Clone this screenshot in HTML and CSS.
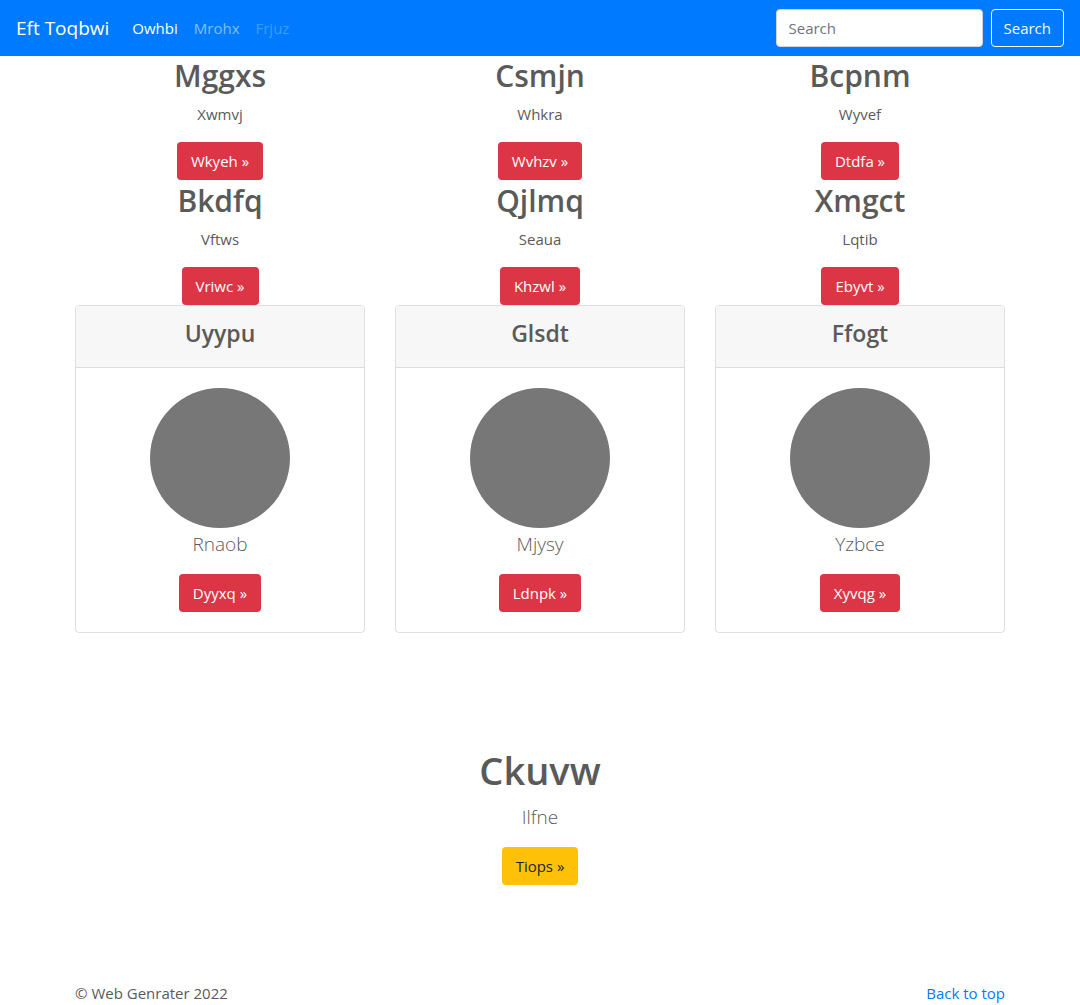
FILE: index.html
```html
<!DOCTYPE html>
<html lang="en">
<head>
<meta charset="utf-8">
<meta name="viewport" content="width=device-width, initial-scale=1">
<title>Eft Toqbwi</title>
<link rel="stylesheet" href="styles.css">
</head>
<body>
<header class="navbar" id="top">
  <a class="brand" href="#">Eft Toqbwi</a>
  <nav class="nav">
    <a class="nav-link active" href="#">Owhbi</a>
    <a class="nav-link" href="#">Mrohx</a>
    <a class="nav-link disabled" href="#" aria-disabled="true">Frjuz</a>
  </nav>
  <form class="search">
    <input class="search-input" type="search" placeholder="Search" aria-label="Search">
    <button class="btn btn-outline" type="submit">Search</button>
  </form>
</header>
<main class="container">
  <div class="row">
    <section class="feature"><h2>Mggxs</h2><p>Xwmvj</p><a class="btn btn-danger" href="#">Wkyeh »</a></section>
    <section class="feature"><h2>Csmjn</h2><p>Whkra</p><a class="btn btn-danger" href="#">Wvhzv »</a></section>
    <section class="feature"><h2>Bcpnm</h2><p>Wyvef</p><a class="btn btn-danger" href="#">Dtdfa »</a></section>
    <section class="feature"><h2>Bkdfq</h2><p>Vftws</p><a class="btn btn-danger" href="#">Vriwc »</a></section>
    <section class="feature"><h2>Qjlmq</h2><p>Seaua</p><a class="btn btn-danger" href="#">Khzwl »</a></section>
    <section class="feature"><h2>Xmgct</h2><p>Lqtib</p><a class="btn btn-danger" href="#">Ebyvt »</a></section>
  </div>
  <div class="row">
    <article class="card">
      <div class="card-header"><h4>Uyypu</h4></div>
      <div class="card-body"><div class="avatar"></div><p class="lead">Rnaob</p><a class="btn btn-danger" href="#">Dyyxq »</a></div>
    </article>
    <article class="card">
      <div class="card-header"><h4>Glsdt</h4></div>
      <div class="card-body"><div class="avatar"></div><p class="lead">Mjysy</p><a class="btn btn-danger" href="#">Ldnpk »</a></div>
    </article>
    <article class="card">
      <div class="card-header"><h4>Ffogt</h4></div>
      <div class="card-body"><div class="avatar"></div><p class="lead">Yzbce</p><a class="btn btn-danger" href="#">Xyvqg »</a></div>
    </article>
  </div>
  <section class="callout">
    <h1>Ckuvw</h1>
    <p class="lead">Ilfne</p>
    <a class="btn btn-warning" href="#">Tiops »</a>
  </section>
</main>
<footer class="footer container">
  <p>© Web Genrater 2022</p>
  <a href="#top">Back to top</a>
</footer>
</body>
</html>
```

FILE: styles.css
```css
*, *::before, *::after { box-sizing: border-box; }

body {
  margin: 0;
  font: 400 15px/24px "Open Sans", "Noto Sans", sans-serif;
  color: #5a5a5a;
  background: #fff;
}

h1, h2, h4, p { margin: 0; }
h1, h2, h4 { font-weight: 600; }
a { color: #007bff; text-decoration: none; }

.navbar {
  display: flex;
  align-items: center;
  min-height: 56px;
  padding: 0 16px;
  background: #007bff;
}
.brand { margin-right: 15px; font-size: 19px; line-height: 30px; color: #fff; }
.nav { display: flex; }
.nav-link { padding: 8px; color: rgba(255, 255, 255, .5); }
.nav-link.active { color: #fff; }
.nav-link.disabled { color: rgba(255, 255, 255, .25); }

.search { display: flex; gap: 8px; margin-left: auto; }
.search-input {
  width: 207px;
  height: 38px;
  padding: 6px 12px;
  border: 1px solid #ced4da;
  border-radius: 4px;
  font: inherit;
  color: #495057;
  background: #fff;
  appearance: none;
}
.search-input::placeholder { color: #6c757d; opacity: 1; }

.btn {
  display: inline-block;
  padding: 6px 13px;
  border: 1px solid transparent;
  border-radius: 4px;
  font: inherit;
  vertical-align: middle;
  cursor: pointer;
}
.btn-outline { padding: 6px 12px; border-color: #f8f9fa; color: #f8f9fa; background: transparent; }
.btn-danger { color: #fff; background: #dc3545; }
.btn-warning { color: #212529; background: #ffc107; }

.container { width: 100%; max-width: 960px; margin: 0 auto; padding: 0 15px; }
.row {
  display: grid;
  grid-template-columns: repeat(3, 1fr);
  gap: 1px 30px;
  text-align: center;
}

.feature h2 { padding-bottom: 6px; font-size: 30px; line-height: 40px; }
.feature p { margin-bottom: 16px; }

.card { border: 1px solid #dfdfdf; border-radius: 4px; overflow: hidden; }
.card-header { padding: 12px 20px; border-bottom: 1px solid #dfdfdf; background: #f7f7f7; }
.card-header h4 { padding-bottom: 7px; font-size: 23px; line-height: 30px; }
.card-body { padding: 20px; }
.avatar { width: 140px; height: 140px; margin: 0 auto; border-radius: 50%; background: #777; }
.lead { padding-top: 2px; margin-bottom: 16px; font-size: 19px; line-height: 28px; font-weight: 300; }

.callout { padding: 113px 0 96px; text-align: center; }
.callout h1 { padding-bottom: 7px; font-size: 38px; line-height: 48px; }

.footer { display: flex; justify-content: space-between; }
```
